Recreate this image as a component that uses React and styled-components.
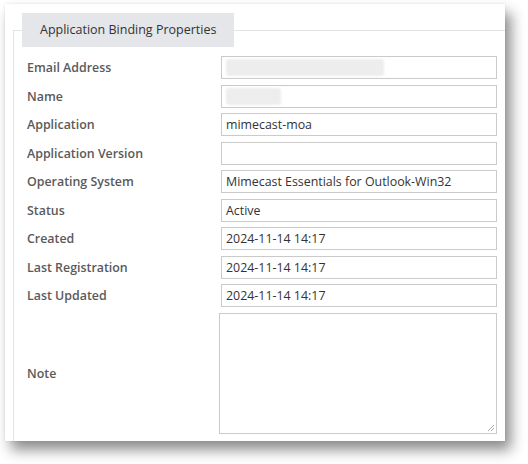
import React from 'react';
import styled, { createGlobalStyle } from 'styled-components';

const GlobalStyle = createGlobalStyle`
  html, body {
    margin: 0;
    background: #fff;
  }
  body {
    font-family: 'Open Sans', 'Liberation Sans', sans-serif;
    width: 528px;
    height: 464px;
    overflow: hidden;
  }
`;

const Shot = styled.div`
  padding: 4px 0 0 5px;
`;

const Panel = styled.div`
  width: 500px;
  height: 437px;
  background: #fff;
  overflow: hidden;
  box-shadow: 6px 9px 13px rgba(0, 0, 0, 0.45), 0 0 3px rgba(0, 0, 0, 0.08);
  padding: 9px 0 0 8px;
  box-sizing: border-box;
`;

const Fieldset = styled.fieldset`
  margin: 0;
  width: 520px;
  height: 480px;
  border: 1px solid #e3e3e3;
  padding: 0 0 0 13px;
  box-sizing: border-box;
`;

const Legend = styled.legend`
  background: #e4e6e9;
  color: #333;
  font-size: 12.5px;
  height: 34px;
  line-height: 34px;
  padding: 0 18px;
  margin-left: -5px;
  box-sizing: border-box;
`;

const Grid = styled.div`
  display: grid;
  grid-template-columns: 194px 276px;
  row-gap: 5.5px;
  margin-top: 9px;
`;

const Label = styled.div`
  font-size: 12.4px;
  font-weight: 600;
  color: #5a5a5a;
  display: flex;
  align-items: center;
  height: ${p => (p.tall ? 'auto' : '23px')};
`;

const Field = styled.div`
  height: 23px;
  border: 1px solid #cacaca;
  box-sizing: border-box;
  font-size: 12.4px;
  color: #333;
  padding: 0 4px;
  line-height: 21px;
  white-space: nowrap;
  overflow: hidden;
`;

const Redacted = styled.span`
  display: block;
  margin-top: 2px;
  height: 17px;
  width: ${p => p.w}px;
  border-radius: 3px;
  background: #ededed;
  filter: blur(1px);
`;

const NoteBox = styled.div`
  position: relative;
  margin-left: -2px;
  height: 121px;
  border: 1px solid #cacaca;
  box-sizing: border-box;
  background: #fff;
`;

const Grip = styled.svg`
  position: absolute;
  right: 1px;
  bottom: 1px;
`;

const rows = [
  ['Email Address', null, 158],
  ['Name', null, 55],
  ['Application', 'mimecast-moa'],
  ['Application Version', ''],
  ['Operating System', 'Mimecast Essentials for Outlook-Win32'],
  ['Status', 'Active'],
  ['Created', '2024-11-14 14:17'],
  ['Last Registration', '2024-11-14 14:17'],
  ['Last Updated', '2024-11-14 14:17'],
];

export default function App() {
  return (
    <Shot>
      <GlobalStyle />
      <Panel>
        <Fieldset>
          <Legend>Application Binding Properties</Legend>
          <Grid>
            {rows.map(([label, value, blur]) => (
              <React.Fragment key={label}>
                <Label>{label}</Label>
                <Field>{blur ? <Redacted w={blur} /> : value}</Field>
              </React.Fragment>
            ))}
            <Label tall>Note</Label>
            <NoteBox>
              <Grip width="8" height="8" viewBox="0 0 8 8">
                <path d="M7 1L1 7M7 4L4 7" stroke="#999" strokeWidth="0.8" />
              </Grip>
            </NoteBox>
          </Grid>
        </Fieldset>
      </Panel>
    </Shot>
  );
}
